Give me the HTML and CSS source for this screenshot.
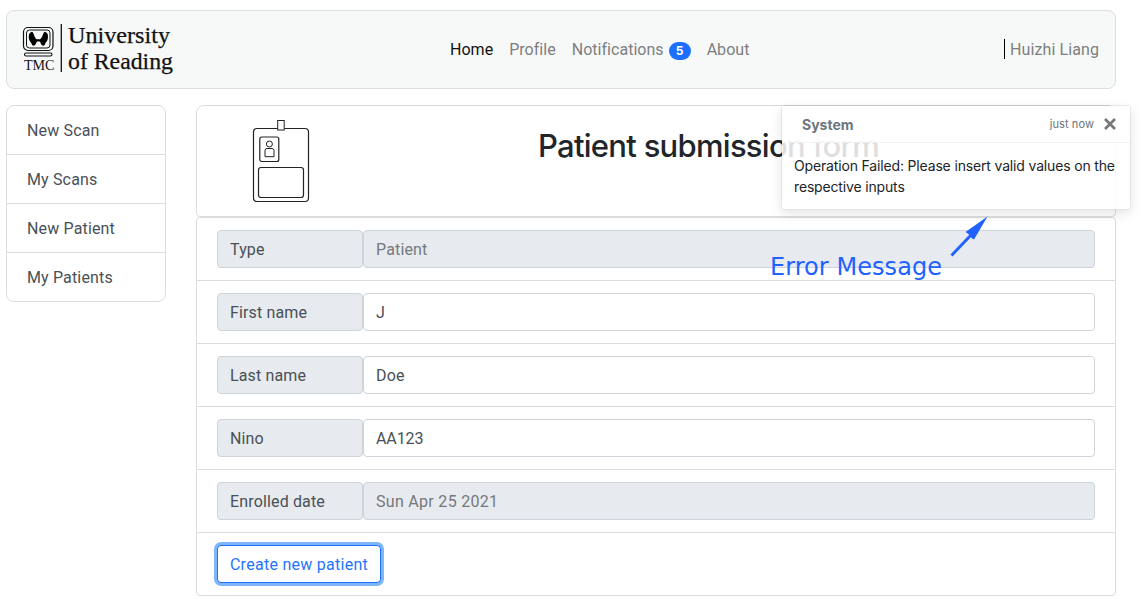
FILE: index.html
```html
<!DOCTYPE html>
<html lang="en">
<head>
<meta charset="utf-8">
<title>Patient submission form</title>
<link rel="stylesheet" href="styles.css">
</head>
<body>
<header class="navbar">
  <svg class="logo" width="156" height="56" viewBox="0 0 156 56">
    <g fill="none" stroke="#111">
      <rect x="1.500" y="5.500" width="29.500" height="23" rx="4.500" stroke-width="1.200"/>
      <rect x="4.500" y="8" width="23.500" height="18" rx="3" stroke-width="1"/>
      <rect x="2.500" y="31" width="27.500" height="3" rx="1.500" stroke-width="1.100"/>
    </g>
    <path d="M10 9.800C7 10.500 6 14 7.300 18C8 20 9.500 20.500 9.700 22C10.200 24 12 24 13 23C14.500 22 14 20.500 15 19.600H17.800C18.800 20.500 18.300 22 19.800 23C20.800 24 22.600 24 23.100 22C23.300 20.500 24.800 20 25.500 18C26.800 14 25.800 10.500 22.800 9.800C20.500 11 21 15.500 18 17.300H14.800C11.800 15.500 12.300 11 10 9.800Z" fill="#000"/>
    <text class="logo-small" x="2" y="47.500" textLength="30.500" lengthAdjust="spacingAndGlyphs">TMC</text>
    <path d="M39.300 2V50" stroke="#111" stroke-width="1.300"/>
    <text class="logo-name" x="46" y="20.500" textLength="102" lengthAdjust="spacingAndGlyphs">University</text>
    <text class="logo-name" x="46" y="46.500" textLength="105" lengthAdjust="spacingAndGlyphs">of Reading</text>
  </svg>
  <nav class="nav">
    <a class="nav-link active">Home</a>
    <a class="nav-link">Profile</a>
    <a class="nav-link"><span>Notifications</span><span class="badge">5</span></a>
    <a class="nav-link">About</a>
  </nav>
  <div class="user"><span>Huizhi Liang</span></div>
</header>
<div class="layout">
  <aside class="menu">
    <a class="menu-item">New Scan</a>
    <a class="menu-item">My Scans</a>
    <a class="menu-item">New Patient</a>
    <a class="menu-item">My Patients</a>
  </aside>
  <main class="main">
    <section class="title-card">
      <svg class="id-icon" width="58" height="84" viewBox="0 0 58 84" fill="none" stroke="#222">
        <rect x="1.500" y="9.500" width="55" height="73" rx="3.500" stroke-width="1.200"/>
        <rect x="25.700" y="1.500" width="6.500" height="9.500" fill="#fff"/>
        <rect x="7.800" y="18" width="19" height="24.500" rx="2" stroke-width="1.200"/>
        <circle cx="17.400" cy="25" r="3"/>
        <path d="M13 37.700V31.500Q13 29.500 15 29.500H20Q22 29.500 22 31.500V37.700Z"/>
        <rect x="6.500" y="48.500" width="45" height="30" rx="2.500" stroke-width="1.200"/>
      </svg>
      <h1 class="title">Patient submission form</h1>
    </section>
    <form class="form">
      <div class="row"><label class="label">Type</label><div class="field disabled">Patient</div></div>
      <div class="row"><label class="label">First name</label><div class="field">J</div></div>
      <div class="row"><label class="label">Last name</label><div class="field">Doe</div></div>
      <div class="row"><label class="label">Nino</label><div class="field code">AA123</div></div>
      <div class="row"><label class="label">Enrolled date</label><div class="field disabled date">Sun Apr 25 2021</div></div>
      <div class="row"><button class="submit" type="button">Create new patient</button></div>
    </form>
  </main>
</div>
<div class="toast">
  <div class="toast-head">
    <strong class="toast-title">System</strong>
    <small class="toast-time">just now</small>
    <svg class="close" width="12" height="12" viewBox="0 0 12 12"><path d="M1 1L11 11M11 1L1 11" stroke="#777" stroke-width="2.800"/></svg>
  </div>
  <div class="toast-body">Operation Failed: Please insert valid values on the<br>respective inputs</div>
</div>
<svg class="annotation" width="224" height="70" viewBox="0 0 224 70">
  <text class="note" x="0" y="60" textLength="172">Error Message</text>
  <path d="M181.500 40.500L201 20" stroke="#1f62ff" stroke-width="2.900"/>
  <path d="M217.500 1.500L195.500 17L198.500 19L202 23.500L204 24.500Z" fill="#1f62ff"/>
</svg>
</body>
</html>
```
FILE: styles.css
```css
* { box-sizing: border-box; }
body {
  margin: 0;
  padding: 10px 25px 0 6px;
  height: 611px;
  overflow: hidden;
  background: #fff;
  color: #212529;
  font: 16px/24px Roboto, sans-serif;
  letter-spacing: .15px;
}
.navbar {
  display: grid;
  grid-template-columns: 428px 1fr auto;
  align-items: center;
  height: 79px;
  padding: 0 16px 0 15px;
  border: 1px solid #dcdedf;
  border-radius: 8px;
  background: #f7f9f8;
}
.logo { display: block; }
.logo text { fill: #111; font-family: "Liberation Serif", serif; letter-spacing: 0; }
.logo .logo-name { font-size: 22.5px; stroke: #111; stroke-width: .25px; }
.logo .logo-small { font-size: 15px; }
.nav { display: flex; gap: 16px; color: #7d7f7f; letter-spacing: .03px; }
.nav-link { display: flex; align-items: center; }
.active { color: #111; }
.badge {
  display: grid;
  place-items: center;
  width: 22px;
  height: 18px;
  margin: 3px 0 0 5px;
  border-radius: 9px;
  background: #1f6fff;
  color: #fff;
  font: 700 12px/18px Inter, sans-serif;
}
.user { display: flex; height: 20px; margin-top: -1px; padding: 1px 0 0 5px; align-items: center; border-left: 1px solid #000; color: #7d7f7f; letter-spacing: .1px; }
.layout { display: grid; grid-template-columns: 160px 920px; gap: 30px; align-items: start; margin-top: 16px; }
.menu { border: 1px solid #dcdcde; border-radius: 8px; color: #495057; }
.menu-item { display: block; height: 49px; padding: 13px 20px 11px; border-bottom: 1px solid #dcdcde; }
.menu-item:last-child { height: 48px; border: 0; }
.title-card {
  display: grid;
  grid-template-columns: 170px 1fr;
  height: 112px;
  border: 1px solid #dcdcde;
  border-radius: 8px 8px 4px 4px;
}
.id-icon { margin: 13px 0 0 55px; }
.title {
  margin: 21px 0 0;
  padding-left: 171px;
  font: 500 31px/38px Inter, sans-serif;
  letter-spacing: -.72px;
}
.form { border: 1px solid #dcdcde; border-radius: 4px; }
.row { display: grid; grid-template-columns: 146px 1fr; height: 63px; padding: 12px 20px; border-bottom: 1px solid #dcdcde; }
.row:last-child { display: block; height: 62px; border: 0; }
.label, .field { height: 38px; padding: 7px 12px 5px; border: 1px solid #ced4da; border-radius: 4px; color: #495057; }
.label { background: #e7eaee; }
.field { background: #fff; }
.code { letter-spacing: -.1px; }
.disabled { background: #e7eaee; color: #75797d; }
.date { letter-spacing: .3px; }
.submit {
  width: 164px;
  height: 38px;
  padding: 2px 0 0;
  border: 1px solid #1f6fff;
  border-radius: 4px;
  background: #fff;
  box-shadow: 0 0 0 3px #80b5ff;
  color: #1f74ff;
  font: inherit;
  letter-spacing: .27px;
}
.toast {
  position: absolute;
  left: 781px;
  top: 105px;
  width: 350px;
  height: 105px;
  border: 1px solid rgba(0, 0, 0, .1);
  border-radius: 4px;
  background: rgba(255, 255, 255, .85);
  background-clip: padding-box;
  box-shadow: 0 4px 12px rgba(0, 0, 0, .1);
  font-family: Inter, sans-serif;
}
.toast-head { display: flex; align-items: center; height: 37px; padding: 0 14px 0 20px; border-bottom: 1px solid rgba(0, 0, 0, .05); background: rgba(255, 255, 255, .85); color: #6c757d; }
.toast-title { margin: 2px auto 0 0; font-size: 14px; font-weight: 700; letter-spacing: 0; }
.toast-time { font-size: 11px; letter-spacing: .1px; }
.close { margin-left: 10px; }
.toast-body { padding: 12px; font-size: 14px; line-height: 21px; letter-spacing: -.16px; white-space: nowrap; }
.annotation { position: absolute; left: 770px; top: 215px; overflow: visible; }
.note { fill: #1f62ff; font: 24px "DejaVu Sans", sans-serif; letter-spacing: 0; }
```
